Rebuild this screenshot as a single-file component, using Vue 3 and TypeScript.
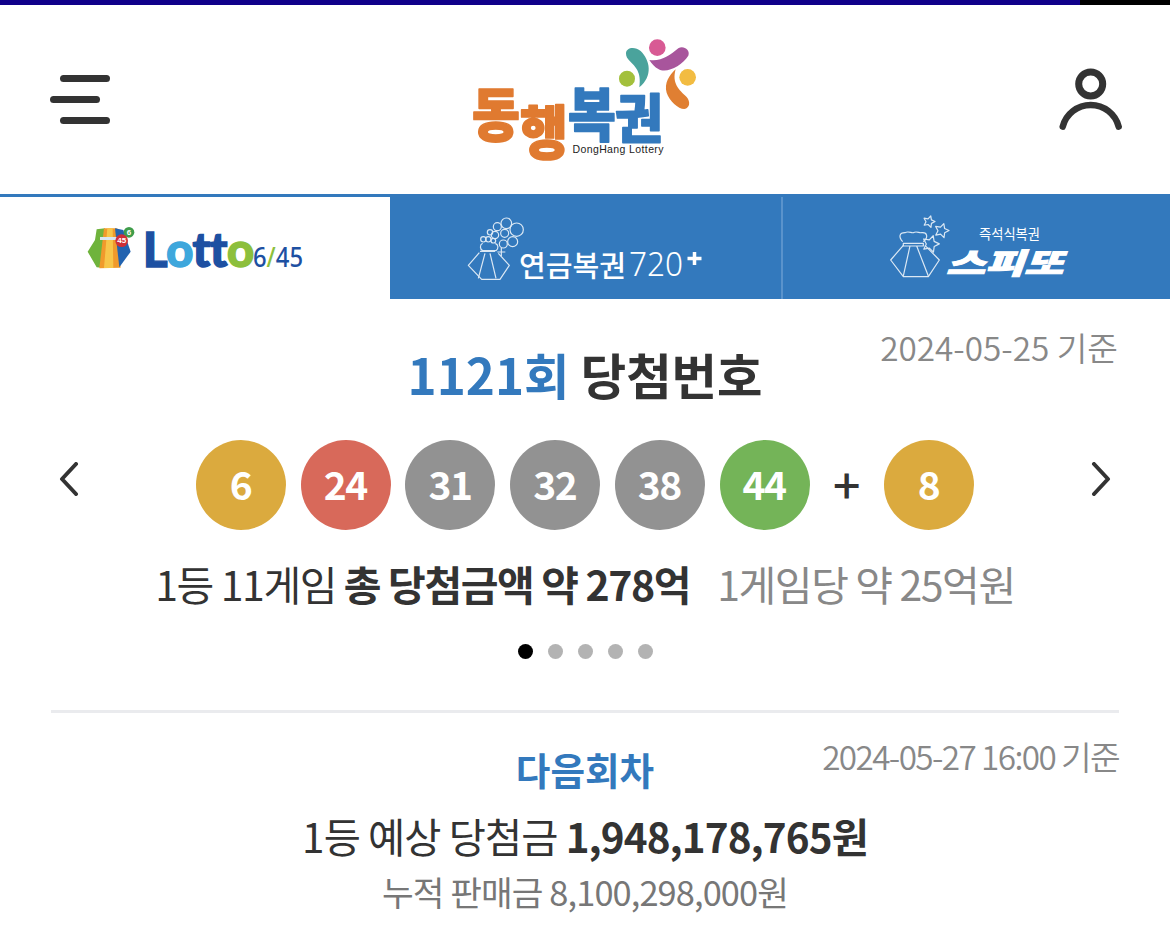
<template>
  <div class="page">
    <div class="loadbar"><div class="loadbar-fill"></div></div>

    <header class="top">
      <svg class="menu-icon" width="60" height="49" viewBox="50 75 60 49">
        <rect x="60" y="75" width="50" height="7" rx="3.5" />
        <rect x="50" y="96" width="50" height="7" rx="3.5" />
        <rect x="60" y="117" width="50" height="7" rx="3.5" />
      </svg>

      <svg class="logo" width="300" height="189" viewBox="435 5 300 189">
        <g class="logo-ko">
          <text transform="translate(472 136) scale(1 1.12)" class="orange">동</text>
          <text transform="translate(520 154) scale(1 1.12)" class="orange">행</text>
          <text transform="translate(568 136) scale(1 1.12)" class="blue">복</text>
          <text transform="translate(615 138) scale(1 1)" class="blue">권</text>
        </g>
        <text x="572.5" y="153" class="logo-en" textLength="91">DongHang Lottery</text>
        <g transform="translate(440 0) scale(.3333)">
          <circle cx="652" cy="143" r="25" fill="#d85a94" />
          <circle cx="561" cy="236" r="24" fill="#a3c03c" />
          <circle cx="743" cy="232" r="25" fill="#f2bc42" />
          <path fill="#4aa39c" d="M558 160C558 142 585 138 602 153C630 180 640 228 598 262C605 215 585 200 570 184C562 176 558 170 558 160Z" />
          <path fill="#a8559c" d="M628 180C665 185 690 165 715 145C730 135 752 150 745 167C725 197 680 222 655 207C645 202 635 192 628 180Z" />
          <path fill="#e07f32" d="M707 208C688 225 672 250 680 278C688 303 715 327 733 327C750 324 752 305 740 291C717 270 695 250 707 208Z" />
        </g>
      </svg>

      <svg class="user-icon" width="64" height="66" viewBox="1059 68 64 66">
        <circle cx="1090.7" cy="84" r="12" />
        <path d="M1062.7 126.7A28.9 28.9 0 0 1 1118.7 126.7" />
      </svg>
    </header>

    <nav class="tabs">
      <div class="tab tab-lotto">
        <svg width="390" height="102" viewBox="0 197 390 102">
          <g transform="translate(0 190) scale(.3333)">
            <path fill="#6fb33c" d="M290 118L315 115L305 233L290 232L263 185L285 150Z" />
            <path fill="#f09a2c" d="M312 115L352 115L362 233L298 235Z" />
            <path fill="#f7c64a" d="M322 115L338 115L340 234L312 234Z" />
            <path fill="#2263b0" d="M345 115L370 120L392 185L358 232Z" />
            <path fill="#d8e6f2" d="M300 141L352 141L352 150L300 150Z" />
            <circle cx="387" cy="127" r="16" fill="#3f9d4a" />
            <text x="387" y="136" class="tiny">6</text>
            <circle cx="365" cy="152" r="19" fill="#cf2f36" />
            <text x="365" y="160" class="tiny">45</text>
          </g>
          <text x="143" y="267" class="lotto-word"><tspan fill="#1d50a2" stroke="#1d50a2">L</tspan><tspan fill="#3ea7dc" stroke="#3ea7dc">o</tspan><tspan fill="#1d50a2" stroke="#1d50a2">tt</tspan><tspan fill="#8cbf3c" stroke="#8cbf3c">o</tspan></text>
          <text x="253" y="267" class="lotto-num" textLength="50" lengthAdjust="spacingAndGlyphs"><tspan fill="#1d50a2">6</tspan><tspan fill="#8cbf3c">/</tspan><tspan fill="#1d50a2">45</tspan></text>
        </svg>
      </div>

      <div class="tab tab-pension">
        <svg width="391" height="102" viewBox="390 197 391 102">
          <g class="outline" transform="translate(440 190) scale(.3333)">
            <path d="M118 188L85 226L125 268H180L208 226L175 190" />
            <path d="M120 184H165M135 190L115 265M150 190L168 265" />
            <path d="M128 160C118 165 120 178 128 182H168C176 176 176 164 166 160" />
            <circle v-for="c in bubbles" :key="c[0] + '-' + c[1]" :cx="c[0]" :cy="c[1]" :r="c[2]" />
            <path d="M172 186H196M184 174V198" />
          </g>
          <text x="519" y="277" class="pension-ko" textLength="107" lengthAdjust="spacingAndGlyphs">연금복권</text>
          <text x="629" y="276" class="pension-num" textLength="54" lengthAdjust="spacingAndGlyphs">720</text>
          <path class="plus" d="M687.5 258.5h14M694.5 252v13" />
        </svg>
      </div>

      <div class="tab tab-speetto">
        <svg width="387" height="102" viewBox="783 197 387 102">
          <g class="outline" transform="translate(860 190) scale(.3333)">
            <path d="M130 166L92 210L130 260H205L238 210L195 166" />
            <path d="M130 160H190V168H130ZM150 168L130 258M170 168L205 258" />
            <path d="M128 155C115 140 118 128 135 128C145 122 155 130 160 128C170 122 178 130 185 128C202 126 206 142 190 155" />
            <polygon :points="star(207, 95, 18)" />
            <polygon :points="star(245, 122, 22)" />
            <polygon :points="star(212, 162, 26)" />
          </g>
          <text x="979" y="239" class="speetto-sub" textLength="61" lengthAdjust="spacingAndGlyphs">즉석식복권</text>
          <text x="946" y="274" class="speetto-ko" textLength="117" lengthAdjust="spacingAndGlyphs">스피또</text>
        </svg>
      </div>
    </nav>

    <main class="content">
      <section class="draw">
        <div class="draw-head">
          <span></span>
          <h1 class="draw-title"><em>1121회</em> 당첨번호</h1>
          <span class="stamp">2024-05-25 기준</span>
        </div>

        <div class="numbers">
          <svg class="arrow" width="20" height="34" viewBox="0 0 20 34"><path d="M17 2L3 17L17 32" /></svg>
          <div class="balls">
            <template v-for="(ball, i) in balls" :key="ball.n">
              <span v-if="i === balls.length - 1" class="plus-sign">+</span>
              <span class="ball" :class="ball.tone">{{ ball.n }}</span>
            </template>
          </div>
          <svg class="arrow" width="20" height="34" viewBox="0 0 20 34"><path d="M3 2L17 17L3 32" /></svg>
        </div>

        <p class="prize">
          1등 11게임 <strong>총 당첨금액 약 278억</strong><span class="per-game">1게임당 약 25억원</span>
        </p>

        <div class="dots">
          <span v-for="n in 5" :key="n" class="dot" :class="{ active: n === 1 }"></span>
        </div>
      </section>

      <section class="next">
        <div class="next-head">
          <span></span>
          <h2 class="next-title">다음회차</h2>
          <span class="stamp tight">2024-05-27 16:00 기준</span>
        </div>
        <p class="expect">1등 예상 당첨금 <strong>1,948,178,765원</strong></p>
        <p class="sales">누적 판매금 8,100,298,000원</p>
      </section>
    </main>
  </div>
</template>

<script setup lang="ts">
type Ball = { n: number; tone: 'gold' | 'red' | 'gray' | 'green' }

const balls: Ball[] = [
  { n: 6, tone: 'gold' },
  { n: 24, tone: 'red' },
  { n: 31, tone: 'gray' },
  { n: 32, tone: 'gray' },
  { n: 38, tone: 'gray' },
  { n: 44, tone: 'green' },
  { n: 8, tone: 'gold' },
]

// x, y, r of the bubbles above the pension bag
const bubbles: number[][] = [
  [199, 100, 16],
  [230, 119, 20],
  [218, 155, 15],
  [194, 130, 12],
  [172, 110, 12],
  [165, 135, 11],
  [150, 127, 8],
  [145, 148, 8],
  [130, 148, 8],
  [160, 152, 7],
  [190, 162, 12],
]

function star(cx: number, cy: number, r: number) {
  const pts: string[] = []
  for (let i = 0; i < 10; i++) {
    const rad = i % 2 ? r * 0.5 : r
    const a = -Math.PI / 2 + 0.3 + (i * Math.PI) / 5
    pts.push((cx + rad * Math.cos(a)).toFixed(1) + ',' + (cy + rad * Math.sin(a)).toFixed(1))
  }
  return pts.join(' ')
}
</script>

<style>
html,
body {
  background: #fff;
}
</style>

<style scoped>
.page {
  width: 1170px;
  height: 949px;
  overflow: hidden;
  background: #fff;
  color: #333;
  font-family: 'Noto Sans CJK KR', 'Noto Sans', sans-serif;
}

p,
h1,
h2 {
  margin: 0;
}

svg {
  display: block;
}

.loadbar {
  height: 5px;
  background: #000;
}

.loadbar-fill {
  width: 1080px;
  height: 5px;
  background: #10008a;
}

.top {
  height: 189px;
  display: grid;
  grid-template-columns: 1fr 300px 1fr;
  align-items: start;
}

.menu-icon {
  margin: 70px 0 0 50px;
  fill: #333;
}

.user-icon {
  justify-self: end;
  margin: 63px 47px 0 0;
  fill: none;
  stroke: #333;
}

.user-icon circle {
  stroke-width: 7;
}

.user-icon path {
  stroke-width: 6.5;
  stroke-linecap: round;
}

.logo-ko text {
  font-size: 52px;
  font-weight: 900;
  stroke-width: 1.5;
  stroke-linejoin: round;
}

.orange {
  fill: #e07a30;
  stroke: #e07a30;
}

.blue {
  fill: #3379bd;
  stroke: #3379bd;
}

.logo-en {
  font-family: 'Liberation Sans', sans-serif;
  font-size: 10.5px;
  fill: #222;
}

.tabs {
  display: flex;
  height: 105px;
  background: #3379bd;
  padding-top: 3px;
  box-sizing: border-box;
}

.tab {
  height: 102px;
}

.tab-lotto {
  width: 390px;
  background: #fff;
}

.tab-pension {
  width: 391px;
  border-right: 2px solid #5a93cc;
}

.tiny {
  font-family: 'Liberation Sans', sans-serif;
  font-size: 24px;
  font-weight: 700;
  fill: #fff;
  text-anchor: middle;
}

.lotto-word {
  font-family: Lato, sans-serif;
  font-size: 47px;
  font-weight: 900;
  stroke-width: 1.4;
  letter-spacing: -0.4px;
}

.lotto-num {
  font-family: 'Noto Sans', sans-serif;
  font-size: 27px;
  font-weight: 500;
}

.outline {
  fill: none;
  stroke: #dbe8f4;
  stroke-width: 3.6;
  stroke-linejoin: round;
}

.pension-ko {
  font-size: 29px;
  font-weight: 500;
  fill: #fff;
}

.pension-num {
  font-family: 'Noto Sans', sans-serif;
  font-size: 33px;
  font-weight: 300;
  fill: #fff;
}

.plus {
  stroke: #fff;
  stroke-width: 3.5;
}

.speetto-sub {
  font-size: 14px;
  fill: #fff;
}

.speetto-ko {
  font-size: 29px;
  font-weight: 900;
  font-style: italic;
  fill: #fff;
  stroke: #fff;
  stroke-width: 1;
}

.content {
  padding: 0 51px;
}

.draw {
  height: 411px;
  border-bottom: 3px solid #eaebee;
}

.draw-head,
.next-head {
  display: grid;
  grid-template-columns: 1fr auto 1fr;
  align-items: start;
}

.draw-title {
  margin-top: 37px;
  font-size: 49.4px;
  line-height: 76px;
  font-weight: 700;
  white-space: nowrap;
}

.draw-title em {
  font-style: normal;
  color: #3379bd;
}

.stamp {
  justify-self: end;
  margin: 21px 1px 0 0;
  font-size: 33.3px;
  line-height: 54px;
  font-weight: 350;
  color: #888;
  white-space: nowrap;
}

.stamp.tight {
  margin: 16px 0 0 0;
  letter-spacing: -1.6px;
}

.numbers {
  display: flex;
  align-items: center;
  justify-content: space-between;
  height: 90px;
  margin-top: 28px;
  padding: 0 8px;
}

.arrow {
  margin-bottom: 12px;
  fill: none;
  stroke: #333;
  stroke-width: 4;
  stroke-linecap: round;
  stroke-linejoin: round;
}

.balls {
  display: flex;
  align-items: center;
  gap: 14.7px;
}

.ball {
  box-sizing: border-box;
  width: 90px;
  height: 90px;
  padding-bottom: 5px;
  border-radius: 50%;
  display: flex;
  align-items: center;
  justify-content: center;
  color: #fff;
  font-size: 39px;
  font-weight: 700;
  letter-spacing: -1.5px;
  text-indent: -1px;
}

.gold {
  background: #dbaa3e;
}

.red {
  background: #d8695a;
}

.gray {
  background: #929292;
}

.green {
  background: #74b458;
}

.plus-sign {
  width: 45px;
  margin-bottom: 4px;
  text-align: center;
  font-size: 48px;
  line-height: 82px;
  font-weight: 500;
}

.prize {
  margin-top: 23px;
  text-align: center;
  font-size: 41px;
  line-height: 60px;
  letter-spacing: -1.4px;
  font-weight: 400;
  white-space: nowrap;
}

.prize strong,
.expect strong {
  font-weight: 700;
}

.per-game {
  margin-left: 27px;
  color: #888;
}

.dots {
  display: flex;
  justify-content: center;
  gap: 15px;
  margin-top: 31px;
}

.dot {
  width: 15px;
  height: 15px;
  border-radius: 50%;
  background: #b3b3b3;
}

.dot.active {
  background: #000;
}

.next-title {
  margin-top: 27px;
  font-size: 37.6px;
  line-height: 58px;
  font-weight: 700;
  color: #3379bd;
  white-space: nowrap;
}

.expect {
  margin-top: 8px;
  text-align: center;
  font-size: 40.4px;
  line-height: 60px;
  letter-spacing: -0.9px;
}

.sales {
  text-align: center;
  font-size: 34.4px;
  line-height: 50px;
  letter-spacing: -0.9px;
  color: #777;
}
</style>
